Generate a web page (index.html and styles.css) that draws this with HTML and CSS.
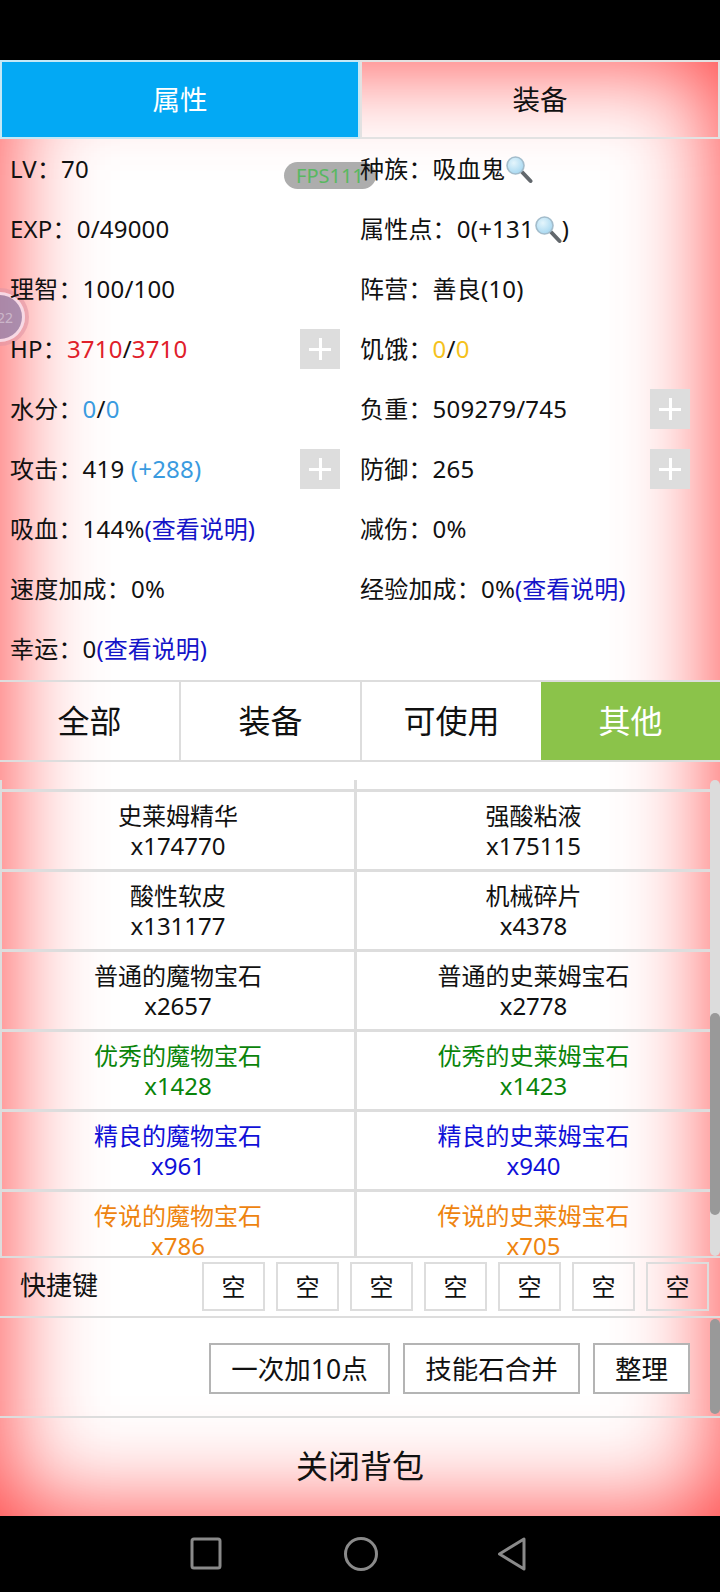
FILE: index.html
```html
<!DOCTYPE html>
<html lang="zh-CN">
<head>
    <meta charset="UTF-8">
    <meta name="viewport" content="width=device-width, initial-scale=1.0">
    <title>背包</title>
    <link rel="stylesheet" href="styles.css">
</head>
<body>
<svg class="svg-defs" width="0" height="0">
    <defs>
        <radialGradient id="lens" cx="0.4" cy="0.35" r="0.7">
            <stop offset="0" stop-color="#e4f5fc"/>
            <stop offset="1" stop-color="#a4d6f0"/>
        </radialGradient>
        <symbol id="glass" viewBox="0 0 28 28">
            <path d="M17 16 L25.5 25" stroke="#62676c" stroke-width="4" stroke-linecap="round"/>
            <circle cx="10.5" cy="9.5" r="8.5" fill="url(#lens)" stroke="#a3bccb" stroke-width="1.6"/>
        </symbol>
    </defs>
</svg>
<div class="status-bar"></div>
<div class="app">
    <div class="main-tabs">
        <div class="main-tab active">属性</div>
        <div class="main-tab">装备</div>
    </div>

    <div class="fps">FPS111</div>
    <div class="float-ball"><span>22</span></div>

    <div class="stats">
        <div class="stat"><span>LV：70</span></div>
        <div class="stat"><span>种族：吸血鬼<svg class="glass"><use href="#glass"/></svg></span></div>
        <div class="stat"><span>EXP：0/49000</span></div>
        <div class="stat"><span>属性点：0(+131<svg class="glass"><use href="#glass"/></svg>)</span></div>
        <div class="stat"><span>理智：100/100</span></div>
        <div class="stat"><span>阵营：善良(10)</span></div>
        <div class="stat"><span>HP：<b class="red">3710</b>/<b class="red">3710</b></span><div class="plus"></div></div>
        <div class="stat"><span>饥饿：<b class="yellow">0</b>/<b class="yellow">0</b></span></div>
        <div class="stat"><span>水分：<b class="sky">0</b>/<b class="sky">0</b></span></div>
        <div class="stat"><span>负重：509279/745</span><div class="plus"></div></div>
        <div class="stat"><span>攻击：419 <b class="sky">(+288)</b></span><div class="plus"></div></div>
        <div class="stat"><span>防御：265</span><div class="plus"></div></div>
        <div class="stat"><span>吸血：144%<b class="link">(查看说明)</b></span></div>
        <div class="stat"><span>减伤：0%</span></div>
        <div class="stat"><span>速度加成：0%</span></div>
        <div class="stat"><span>经验加成：0%<b class="link">(查看说明)</b></span></div>
        <div class="stat"><span>幸运：0<b class="link">(查看说明)</b></span></div>
    </div>

    <div class="filter-tabs">
        <div class="filter-tab">全部</div>
        <div class="filter-tab">装备</div>
        <div class="filter-tab">可使用</div>
        <div class="filter-tab active">其他</div>
    </div>

    <div class="list-wrap">
        <div class="item-list">
            <div class="item-row top-row"><div class="item"></div><div class="item"></div></div>
            <div class="item-row">
                <div class="item">史莱姆精华<br>x174770</div>
                <div class="item">强酸粘液<br>x175115</div>
            </div>
            <div class="item-row">
                <div class="item">酸性软皮<br>x131177</div>
                <div class="item">机械碎片<br>x4378</div>
            </div>
            <div class="item-row">
                <div class="item">普通的魔物宝石<br>x2657</div>
                <div class="item">普通的史莱姆宝石<br>x2778</div>
            </div>
            <div class="item-row">
                <div class="item good">优秀的魔物宝石<br>x1428</div>
                <div class="item good">优秀的史莱姆宝石<br>x1423</div>
            </div>
            <div class="item-row">
                <div class="item fine">精良的魔物宝石<br>x961</div>
                <div class="item fine">精良的史莱姆宝石<br>x940</div>
            </div>
            <div class="item-row">
                <div class="item legend">传说的魔物宝石<br>x786</div>
                <div class="item legend">传说的史莱姆宝石<br>x705</div>
            </div>
        </div>
        <div class="scrollbar"><div class="thumb"></div></div>
    </div>

    <div class="shortcut-row">
        <div class="shortcut-label">快捷键</div>
        <div class="shortcut-keys">
            <div class="key">空</div>
            <div class="key">空</div>
            <div class="key">空</div>
            <div class="key">空</div>
            <div class="key">空</div>
            <div class="key">空</div>
            <div class="key">空</div>
        </div>
    </div>

    <div class="action-row">
        <button class="action-btn">一次加10点</button>
        <button class="action-btn">技能石合并</button>
        <button class="action-btn">整理</button>
        <div class="action-thumb"></div>
    </div>

    <div class="close-row">关闭背包</div>
</div>
<div class="nav-bar">
    <svg class="nav-icon" width="32" height="34" viewBox="0 0 32 34"><rect x="2" y="2" width="28" height="29" rx="2" fill="none" stroke="#8a8a8a" stroke-width="3"/></svg>
    <svg class="nav-icon" width="36" height="36" viewBox="0 0 36 36"><circle cx="18" cy="18" r="15.5" fill="none" stroke="#8a8a8a" stroke-width="3"/></svg>
    <svg class="nav-icon" width="32" height="36" viewBox="0 0 32 36"><path d="M26 3 V33 L1.5 18 Z" fill="none" stroke="#8a8a8a" stroke-width="3" stroke-linejoin="round"/></svg>
</div>
</body>
</html>
```

FILE: styles.css
```css
/* CSS styles */
* {
    box-sizing: border-box;
}
html, body {
    margin: 0;
    padding: 0;
}
body {
    width: 720px;
    height: 1592px;
    background-color: #000;
    color: #111;
    font-family: "Noto Sans", "Noto Sans CJK SC", sans-serif;
    font-size: 24px;
    overflow: hidden;
}
b {
    font-weight: normal;
}
.svg-defs {
    position: absolute;
}
.status-bar {
    height: 60px;
}
.app {
    position: relative;
    height: 1456px;
    background-color: #fff;
    box-shadow: inset 0 0 100px rgba(255, 0, 0, 0.8);
}

/* top tabs */
.main-tabs {
    display: flex;
    height: 79px;
}
.main-tab {
    flex: 1;
    display: flex;
    align-items: center;
    justify-content: center;
    padding-bottom: 3px;
    border: 2px solid #e2e2e2;
    font-size: 27.5px;
}
.main-tab.active {
    background-color: #03a9f4;
    border-color: #c4e8f6;
    color: #fff;
}

/* stats */
.stats {
    position: relative;
    display: grid;
    grid-template-columns: 350px 350px;
    grid-auto-rows: 60px;
    height: 541px;
}
.stat {
    display: flex;
    align-items: center;
    justify-content: space-between;
    padding: 0 10px;
    letter-spacing: 0.2px;
}
.stat span {
    margin-bottom: 4px;
    white-space: pre;
}
.glass {
    width: 28px;
    height: 28px;
    vertical-align: -6px;
}
.plus {
    position: relative;
    width: 40px;
    height: 40px;
    background-color: #ddd;
}
.plus::before, .plus::after {
    content: "";
    position: absolute;
    background-color: #fff;
}
.plus::before {
    left: 9px;
    top: 19px;
    width: 22px;
    height: 3px;
}
.plus::after {
    left: 19px;
    top: 9px;
    width: 3px;
    height: 22px;
}
.red { color: #e0202a; }
.yellow { color: #f5c21b; }
.sky { color: #3a9be0; }
.link {
    color: #1414c8;
    letter-spacing: 0;
}

.fps {
    position: absolute;
    left: 284px;
    top: 102px;
    width: 92px;
    height: 27px;
    line-height: 27px;
    padding-left: 12px;
    border-radius: 14px;
    background-color: #adadad;
    color: #58b860;
    font-size: 20px;
    white-space: nowrap;
    overflow: hidden;
}
.float-ball {
    position: absolute;
    left: -25px;
    top: 232px;
    width: 50px;
    height: 50px;
    display: flex;
    align-items: center;
    justify-content: center;
    border-radius: 50%;
    background-color: rgba(150, 130, 170, 0.8);
    border: 3px solid rgba(255, 225, 235, 0.9);
    box-shadow: 0 0 0 4px rgba(225, 150, 165, 0.6);
    color: rgba(255, 255, 255, 0.4);
    font-size: 14px;
    padding-left: 10px;
}

/* filter tabs */
.filter-tabs {
    display: flex;
    height: 82px;
    border-top: 2px solid #ddd;
    border-bottom: 2px solid #ddd;
}
.filter-tab {
    flex: 1;
    display: flex;
    align-items: center;
    justify-content: center;
    padding-bottom: 5px;
    border-left: 2px solid #ddd;
    font-size: 32px;
}
.filter-tab:first-child {
    border-left: none;
}
.filter-tab.active {
    background-color: #8bc34a;
    border-left: none;
    color: #fff;
}

/* item list */
.list-wrap {
    display: flex;
    height: 496px;
    padding-top: 18px;
    border-bottom: 2px solid #ddd;
    overflow: hidden;
}
.item-list {
    width: 710px;
    height: 476px;
    overflow: hidden;
    border-left: 2px solid #ddd;
}
.item-row {
    display: flex;
    height: 80px;
    border-bottom: 3px solid #ddd;
}
.top-row {
    height: 12px;
}
.item {
    flex: 1;
    padding-top: 9px;
    line-height: 30px;
    text-align: center;
}
.item:first-child {
    flex: 0 0 352px;
}
.item + .item {
    border-left: 3px solid #ddd;
}
.good { color: #0a840a; }
.fine { color: #1010d8; }
.legend { color: #ee8410; }

.scrollbar {
    width: 10px;
    height: 476px;
    padding-top: 233px;
    border-radius: 5px;
    background-color: #dcdcdc;
}
.thumb {
    height: 202px;
    border-radius: 5px;
    background-color: #999;
}

/* shortcut keys */
.shortcut-row {
    display: flex;
    height: 60px;
    padding-top: 4px;
    border-bottom: 2px solid #ddd;
}
.shortcut-label {
    width: 202px;
    padding: 3px 0 0 20px;
    font-size: 26px;
}
.shortcut-keys {
    display: flex;
    gap: 11px;
}
.key {
    display: flex;
    align-items: center;
    justify-content: center;
    width: 63px;
    height: 49px;
    padding-bottom: 2px;
    border: 2px solid #ddd;
}

/* action buttons */
.action-row {
    position: relative;
    display: flex;
    justify-content: flex-end;
    gap: 13px;
    height: 100px;
    padding: 25px 30px 0 0;
    border-bottom: 2px solid #ddd;
}
.action-btn {
    width: 181px;
    height: 51px;
    padding: 0 0 3px;
    border: 2px solid #b4b4b4;
    background-color: #fff;
    color: #111;
    font-family: inherit;
    font-size: 26.5px;
}
.action-btn:nth-child(2) {
    width: 177px;
}
.action-btn:nth-child(3) {
    width: 97px;
}
.action-thumb {
    position: absolute;
    right: 0;
    top: 1px;
    width: 10px;
    height: 95px;
    border-radius: 5px;
    background-color: #999;
}

.close-row {
    display: flex;
    align-items: center;
    justify-content: center;
    height: 96px;
    padding-bottom: 4px;
    font-size: 32px;
}

/* bottom nav */
.nav-bar {
    display: flex;
    align-items: center;
    height: 76px;
    padding-left: 190px;
    gap: 121px;
}
.nav-icon:last-child {
    margin-left: -2px;
}
```
